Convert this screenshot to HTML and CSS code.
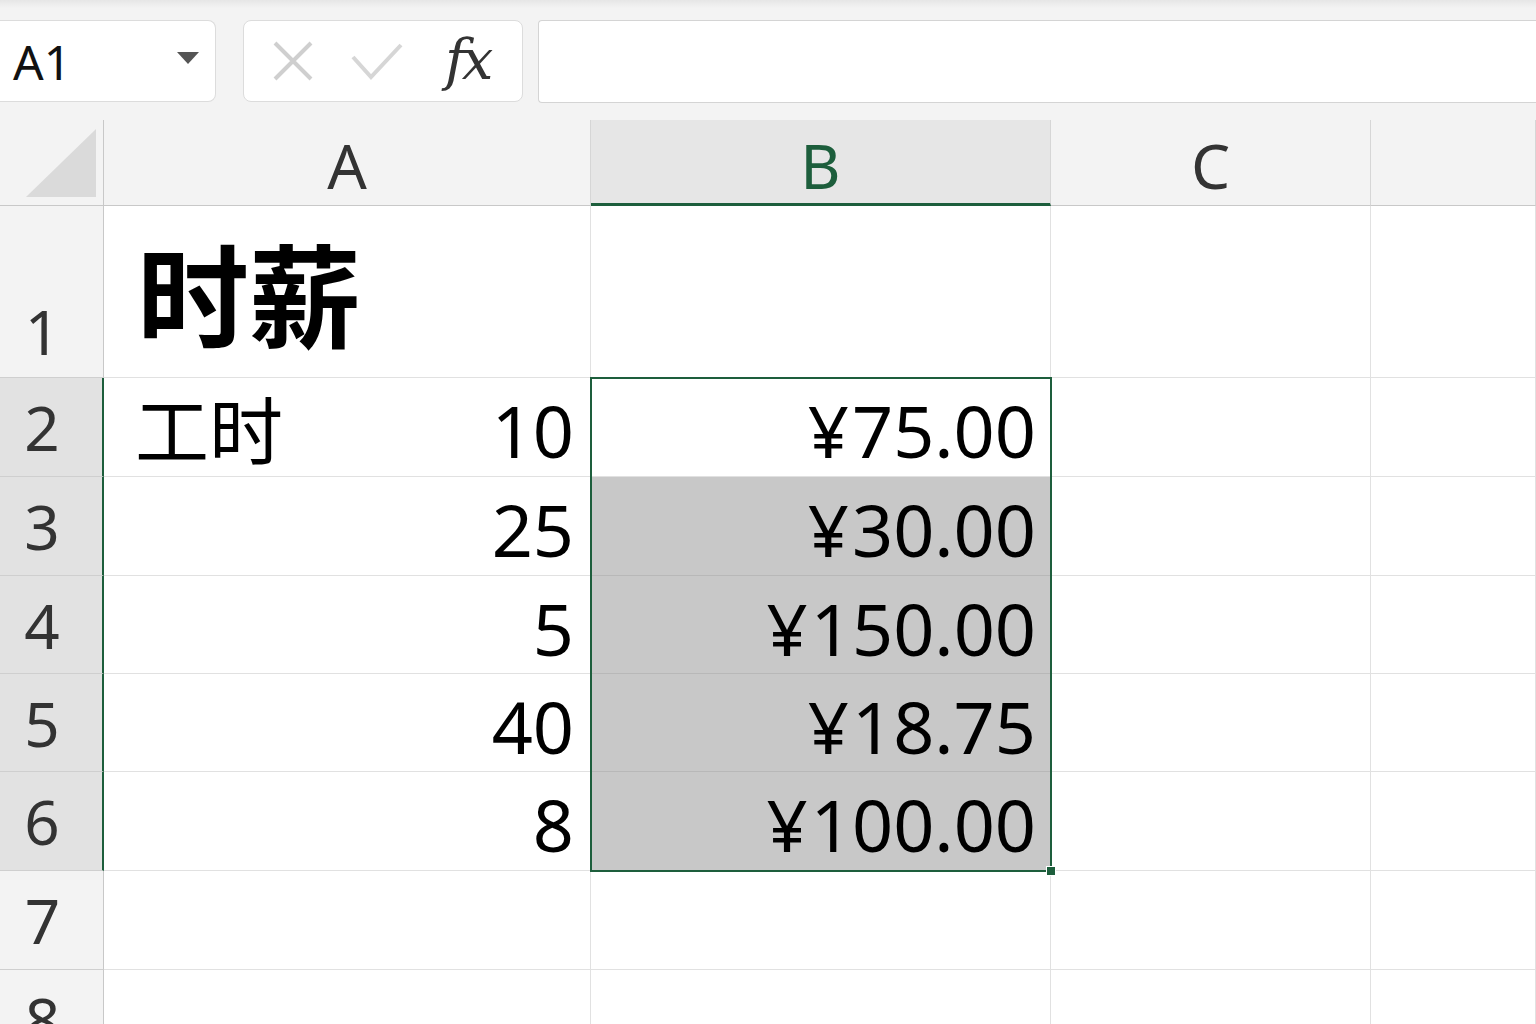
FILE: index.html
```html
<!DOCTYPE html>
<html lang="zh-CN">
<head>
  <meta charset="UTF-8" />
  <title>时薪 - 工作表</title>
  <link rel="stylesheet" href="styles.css">
</head>
<body>
  <header class="formula-bar">
    <div class="name-box">
      <span>A1</span>
      <span class="caret"></span>
    </div>
    <div class="fx-buttons">
      <svg class="icon" width="40" height="40" viewBox="0 0 40 40">
        <path d="M2 2 L38 38 M38 2 L2 38" stroke="#cfcfcf" stroke-width="4" fill="none"/>
      </svg>
      <svg class="icon" width="52" height="40" viewBox="0 0 52 40">
        <path d="M2 16 L20 36 L50 4" stroke="#d6d6d6" stroke-width="4" fill="none"/>
      </svg>
      <span class="fx">fx</span>
    </div>
    <div class="formula-input"></div>
  </header>

  <main class="sheet">
    <div class="corner"><span class="corner-tri"></span></div>
    <div class="col-head">A</div>
    <div class="col-head active">B</div>
    <div class="col-head">C</div>
    <div class="col-head"></div>

    <div class="row-head first">1</div>
    <div class="cell title">时薪</div>
    <div class="cell"></div>
    <div class="cell"></div>
    <div class="cell"></div>

    <div class="row-head active">2</div>
    <div class="cell text"><span class="label">工时</span><span class="num">10</span></div>
    <div class="cell num current"><span class="yen">¥</span>75.00</div>
    <div class="cell"></div>
    <div class="cell"></div>

    <div class="row-head active">3</div>
    <div class="cell num">25</div>
    <div class="cell num picked"><span class="yen">¥</span>30.00</div>
    <div class="cell"></div>
    <div class="cell"></div>

    <div class="row-head active">4</div>
    <div class="cell num">5</div>
    <div class="cell num picked"><span class="yen">¥</span>150.00</div>
    <div class="cell"></div>
    <div class="cell"></div>

    <div class="row-head active">5</div>
    <div class="cell num">40</div>
    <div class="cell num picked"><span class="yen">¥</span>18.75</div>
    <div class="cell"></div>
    <div class="cell"></div>

    <div class="row-head active">6</div>
    <div class="cell num">8</div>
    <div class="cell num picked"><span class="yen">¥</span>100.00</div>
    <div class="cell"></div>
    <div class="cell"></div>

    <div class="row-head">7</div>
    <div class="cell"></div>
    <div class="cell"></div>
    <div class="cell"></div>
    <div class="cell"></div>

    <div class="row-head">8</div>
    <div class="cell"></div>
    <div class="cell"></div>
    <div class="cell"></div>
    <div class="cell"></div>

    <div class="selection"><span class="fill-handle"></span></div>
  </main>
</body>
</html>
```

FILE: styles.css
```css
:root {
  --chrome: #f3f3f3;
  --grid: #e1e1e1;
  --head-line: #cfcfcf;
  --green: #1d5e3c;
  --picked: #c8c8c8;
  --head-text: #333333;
}

* {
  box-sizing: border-box;
  margin: 0;
  padding: 0;
}

body {
  background: #ffffff;
  font-family: "Noto Sans", "Noto Sans CJK SC", sans-serif;
  color: #000;
  overflow: hidden;
  height: 1024px;
}

/* formula bar */
.formula-bar {
  height: 120px;
  background: linear-gradient(#e6e6e6, var(--chrome) 8px);
  display: flex;
  align-items: flex-start;
  padding-top: 20px;
}

.name-box {
  width: 216px;
  height: 82px;
  background: #fff;
  border: 1px solid #dcdcdc;
  border-left: none;
  border-radius: 0 8px 8px 0;
  display: flex;
  align-items: center;
  justify-content: space-between;
  padding: 0 16px 0 13px;
  font-size: 48px;
  color: #111;
}

.caret {
  width: 0;
  height: 0;
  border-left: 11px solid transparent;
  border-right: 11px solid transparent;
  border-top: 12px solid #555;
  margin-bottom: 6px;
}

.fx-buttons {
  margin-left: 27px;
  width: 280px;
  height: 82px;
  background: #fff;
  border: 1px solid #dcdcdc;
  border-radius: 8px;
  display: flex;
  align-items: center;
  padding-left: 29px;
}

.fx-buttons .icon:nth-child(2) {
  margin-left: 38px;
}

.fx {
  margin-left: 42px;
  font-family: "DejaVu Serif", "Liberation Serif", serif;
  font-style: italic;
  font-size: 56px;
  color: #333;
  letter-spacing: -4px;
  margin-bottom: 4px;
}

.formula-input {
  flex: 1;
  margin-left: 15px;
  height: 83px;
  background: #fff;
  border: 1px solid #d4d4d4;
  border-right: none;
  border-radius: 4px 0 0 4px;
}

/* sheet grid */
.sheet {
  position: relative;
  display: grid;
  grid-template-columns: 104px 487px 460px 320px 1fr;
  grid-template-rows: 86px 172px 99px 99px 98px 98px 99px 99px 99px;
}

.corner {
  background: var(--chrome);
  border-right: 1px solid #c8c8c8;
  border-bottom: 1px solid #c8c8c8;
  display: flex;
  align-items: flex-end;
  justify-content: flex-end;
  padding: 0 7px 8px 0;
}

.corner-tri {
  width: 70px;
  height: 68px;
  background: #dadada;
  clip-path: polygon(100% 0, 100% 100%, 0 100%);
}

.col-head {
  background: var(--chrome);
  border-right: 1px solid #d6d6d6;
  border-bottom: 1px solid #c8c8c8;
  display: flex;
  align-items: center;
  justify-content: center;
  font-size: 62px;
  color: var(--head-text);
  padding-top: 4px;
}

.col-head.active {
  background: #e6e6e6;
  color: var(--green);
  border-bottom: 3px solid var(--green);
  padding-top: 6px;
}

.row-head {
  background: var(--chrome);
  border-right: 1px solid #c8c8c8;
  border-bottom: 1px solid var(--head-line);
  display: flex;
  align-items: center;
  justify-content: center;
  font-size: 62px;
  color: var(--head-text);
  padding-right: 18px;
}

.row-head.first {
  align-items: flex-end;
  padding-bottom: 4px;
}

.row-head.active {
  background: #e2e2e2;
  border-right: 2px solid var(--green);
}

.cell {
  background: #fff;
  border-right: 1px solid var(--grid);
  border-bottom: 1px solid var(--grid);
  display: flex;
  align-items: center;
  font-size: 72px;
  line-height: 1;
}

.cell.num {
  justify-content: flex-end;
  padding-right: 16px;
  padding-top: 6px;
}

.yen {
  margin-right: 3px;
}

.cell.picked,
.cell.current {
  padding-right: 14px;
}

.cell.text {
  justify-content: space-between;
  padding-left: 31px;
  padding-right: 16px;
}

.cell.text .label {
  font-size: 74px;
  padding-top: 8px;
}

.cell.text .num {
  padding-top: 6px;
}

.cell.title {
  font-size: 112px;
  font-weight: 700;
  align-items: flex-end;
  padding-left: 33px;
  padding-bottom: 24px;
}

.cell.current {
  background: #fff;
}

.cell.picked {
  background: var(--picked);
  border-bottom-color: #b8b8b8;
}

/* selection outline over B2:B6 */
.selection {
  position: absolute;
  grid-column: 3 / 4;
  grid-row: 3 / 8;
  top: -1px;
  left: -1px;
  right: -1px;
  bottom: -1px;
  border: 2px solid var(--green);
  pointer-events: none;
}

.fill-handle {
  position: absolute;
  right: -6px;
  bottom: -6px;
  width: 10px;
  height: 10px;
  background: var(--green);
  border: 1px solid #fff;
}
```
